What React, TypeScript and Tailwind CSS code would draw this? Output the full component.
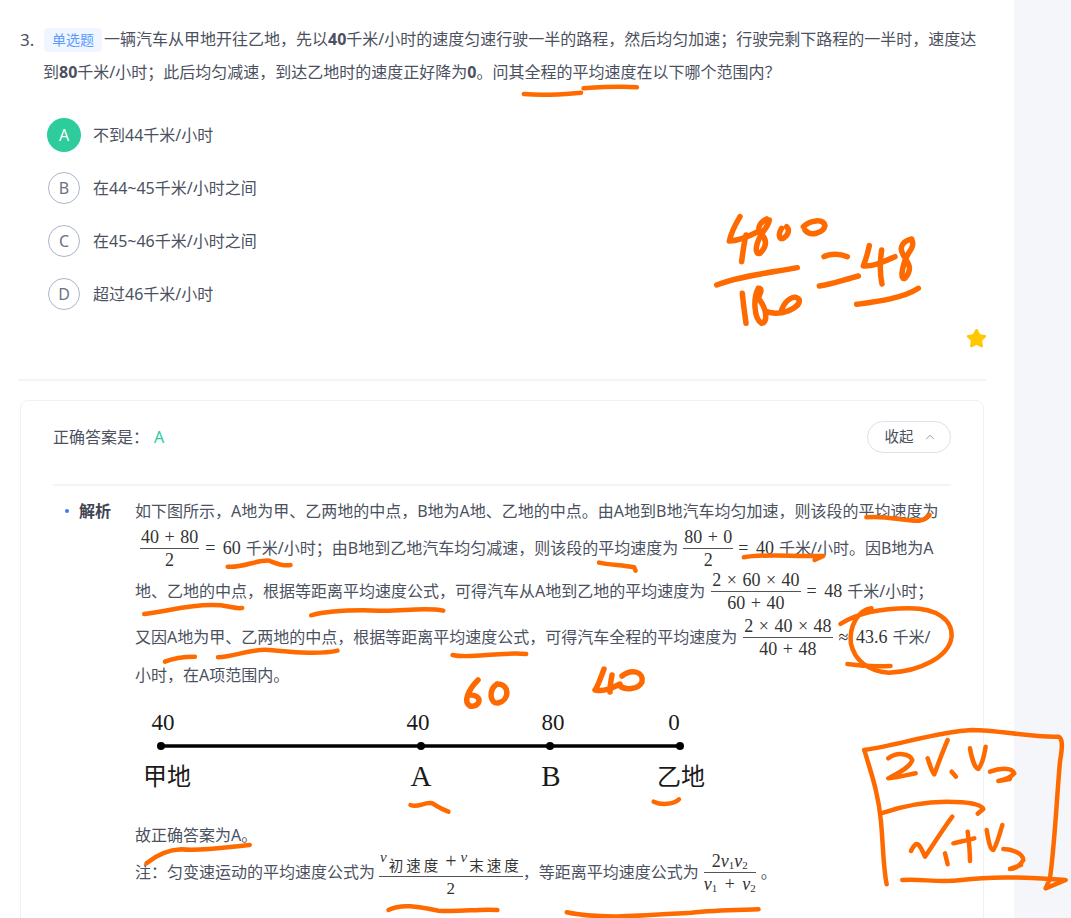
import type { ReactNode } from "react";
import { ChevronUp, Star } from "lucide-react";

const options = [
  { key: "A", text: "不到44千米/小时", correct: true },
  { key: "B", text: "在44~45千米/小时之间", correct: false },
  { key: "C", text: "在45~46千米/小时之间", correct: false },
  { key: "D", text: "超过46千米/小时", correct: false },
];

const Frac = ({ top, bottom, className }: { top: ReactNode; bottom: ReactNode; className?: string }) => (
  <span className={`inline-flex flex-col items-center font-['Liberation_Serif',serif] text-[18px] leading-[22px] text-[#333] [word-spacing:1px] ${className ?? ""}`}>
    <span className="w-full text-center whitespace-nowrap px-[1px]">{top}</span>
    <span className="w-full border-t border-[#555] text-center whitespace-nowrap">{bottom}</span>
  </span>
);

const M = ({ children }: { children: ReactNode }) => (
  <span className="mr-[5px] font-['Liberation_Serif',serif] text-[18px] text-[#333] whitespace-pre [word-spacing:3px]">{children}</span>
);

const ink = "#ff6a00";

// hand written strokes, coordinates taken from the enlarged crops
const sumStrokes = [
  "M90 35 C75 60 62 90 58 108 C85 108 115 95 148 78",
  "M108 90 C102 115 98 145 95 170",
  "M170 42 C145 55 140 75 155 88 C172 105 170 125 150 145 C135 150 135 125 150 95 C160 75 175 65 178 45",
  "M215 70 C205 85 205 105 220 100 C235 90 240 75 230 65",
  "M280 65 C300 45 340 40 345 62 C340 85 300 95 285 75",
  "M20 240 C80 215 170 205 262 188",
  "M97 265 C100 300 105 330 108 355",
  "M145 250 C130 275 130 340 155 355 C175 350 170 310 145 280 C150 265 160 250 145 250",
  "M170 320 C210 335 270 310 268 285 C255 265 225 285 215 315",
  "M342 155 C360 145 390 145 412 155",
  "M328 243 C360 240 400 225 445 213",
  "M478 122 C472 150 465 170 460 183 C490 185 520 170 555 155",
  "M515 135 C510 170 510 210 516 237",
  "M605 102 C580 108 565 125 580 150 C595 175 610 190 585 220 C570 225 575 190 590 155 C600 135 615 125 605 102",
  "M440 298 C500 290 580 280 625 250",
];

const questionStrokes = [
  "M155 265 C200 262 260 258 310 262",
  "M-18 282 C50 288 100 282 148 278",
];

const leftStrokes = [
  "M660 560 C700 565 740 540 780 542 C800 550 820 560 842 555",
  "M418 702 C480 695 560 670 640 676 C670 680 690 688 702 684",
  "M902 706 C960 690 1040 690 1100 692 C1160 695 1230 680 1285 692",
  "M478 845 C500 835 530 830 565 830",
  "M632 832 C680 830 730 805 780 810 C840 815 920 825 978 812",
  "M1312 825 C1360 838 1440 815 1525 822",
];

const rightStrokes = [
  "M975 112 C1030 105 1090 125 1130 122 C1145 118 1155 110 1158 105",
  "M200 248 C230 255 270 255 302 262 L306 272",
  "M620 232 C680 220 760 230 850 228 L825 240",
  "M900 432 C940 405 1000 385 1100 385 C1180 385 1225 420 1222 470 C1215 530 1130 575 1040 578 C980 575 940 540 930 490 C925 440 950 390 990 385",
  "M920 552 C960 558 1010 560 1045 558",
];

const figureStrokes = [
  "M712 345 C730 355 745 335 765 340 C780 350 790 358 805 365",
  "M1308 335 C1325 345 1355 345 1370 328",
  "M65 520 C85 500 110 480 150 478 C200 485 270 470 318 465",
  "M658 660 C690 640 730 650 780 662 C830 668 880 655 925 660",
  "M1095 667 C1180 690 1300 675 1400 668 C1460 660 1520 660 1565 658",
];

const boxStrokes = [
  "M28 75 C130 60 250 20 350 15 C430 15 530 38 610 35 C625 40 622 70 615 110 C605 220 600 350 585 460 L572 490 L632 465 C520 458 420 452 320 465 C250 475 200 460 142 465",
  "M28 75 C45 135 70 200 78 290 C85 370 85 430 95 478",
  "M78 265 C150 240 240 225 320 232 C360 235 380 243 385 252 L368 266",
  "M100 100 C125 80 165 85 172 105 C165 130 125 145 100 160 C125 158 155 150 182 145",
  "M218 100 C225 120 230 140 238 148 C250 115 265 75 278 45",
  "M290 140 L303 155",
  "M345 70 C350 100 360 130 370 132 C380 120 388 90 392 65",
  "M405 140 C430 130 470 125 478 145 C465 160 445 165 430 168 L465 162",
  "M168 378 C185 340 195 360 210 395 C225 375 265 310 292 275",
  "M270 385 L278 418",
  "M295 355 C315 350 340 345 358 340",
  "M338 320 C342 350 345 385 345 408",
  "M395 315 C400 345 405 375 415 375 C425 360 435 325 442 300",
  "M445 372 C470 372 505 385 505 405 C495 425 475 432 465 432 L498 420",
];

const looseStrokes = [
  "M478 680 C468 690 463 702 470 706 C480 708 484 695 470 695",
  "M497 684 C488 690 490 704 498 703 C510 700 510 684 497 684",
  "M604 669 C600 680 597 688 595 690 C605 692 612 688 620 684",
  "M612 675 C610 685 610 690 610 692",
  "M622 676 C632 668 644 672 642 682 C638 690 625 690 620 686",
];

const Strokes = ({ list, transform, width = 4.5 }: { list: string[]; transform?: string; width?: number }) => (
  <g transform={transform}>
    {list.map((d) => (
      <path key={d} d={d} fill="none" stroke={ink} strokeWidth={width} strokeLinecap="round" strokeLinejoin="round" vectorEffect="non-scaling-stroke" />
    ))}
  </g>
);

const Figure = () => (
  <svg width="600" height="100" viewBox="135 700 600 100" className="block">
    <line x1="161" y1="746" x2="680" y2="746" stroke="#000" strokeWidth="3.5" />
    {[161, 421, 550, 680].map((x) => (
      <circle key={x} cx={x} cy="746" r="4" fill="#000" />
    ))}
    <g fontFamily="'Liberation Serif', serif" fontSize="23" fill="#1a1a1a" textAnchor="middle">
      <text x="163" y="730">40</text>
      <text x="418" y="730">40</text>
      <text x="553" y="730">80</text>
      <text x="674" y="730">0</text>
      <text x="421" y="786" fontSize="29">A</text>
      <text x="551" y="786" fontSize="29">B</text>
    </g>
    <g fontFamily="'Noto Sans CJK SC', sans-serif" fontSize="24" fill="#1a1a1a" textAnchor="middle">
      <text x="167" y="785">甲地</text>
      <text x="681" y="785">乙地</text>
    </g>
  </svg>
);

export default function App() {
  return (
    <div className="relative flex h-[918px] w-[1071px] overflow-hidden bg-[#f5f6fa] font-['Noto_Sans','Noto_Sans_CJK_SC',sans-serif] text-[16px] text-[#4b5160]">
      <div className="w-[1014px] shrink-0 bg-white pl-[18px] pr-[28px]">
        {/* Question */}
        <div className="flex pl-[2px] pt-[23px] leading-[33px]">
          <div className="w-[23px] shrink-0 text-[17px]">3.</div>
          <div className="flex-1 whitespace-nowrap">
            <div className="flex items-center">
              <span className="ml-[1px] mr-[2px] h-[24px] rounded-[4px] bg-[#f0f6ff] px-[8px] text-[14px] leading-[24px] text-[#5b9bff]">单选题</span>
              <span>
                一辆汽车从甲地开往乙地，先以<b className="font-bold">40</b>千米/小时的速度匀速行驶一半的路程，然后均匀加速；行驶完剩下路程的一半时，速度达
              </span>
            </div>
            <div>
              到<b className="font-bold">80</b>千米/小时；此后均匀减速，到达乙地时的速度正好降为<b className="font-bold">0</b>。问其全程的平均速度在以下哪个范围内？
            </div>
            <div className="ml-[4px] mt-[29px] flex flex-col gap-[19px]">
              {options.map((o) => (
                <div key={o.key} className="flex h-[34px] items-center gap-[12px] leading-none">
                  <div className="flex w-[34px] justify-center">
                    {o.correct ? (
                      <div className="flex h-[34px] w-[34px] items-center justify-center rounded-full bg-[#2ecb9d] text-white">{o.key}</div>
                    ) : (
                      <div className="flex h-[32px] w-[32px] items-center justify-center rounded-full border border-[#aeb3c9] text-[#6b7285]">{o.key}</div>
                    )}
                  </div>
                  <span>{o.text}</span>
                </div>
              ))}
            </div>
          </div>
        </div>

        <div className="mt-[68px] h-[2px] bg-[#f3f4f6]" />

        {/* Answer card */}
        <div className="mx-[2px] mt-[19px] h-[560px] rounded-t-[8px] border border-[#f0f1f3] px-[32px]">
          <div className="flex items-start justify-between pb-[31px] pt-[20px]">
            <div className="flex h-[32px] items-center">
              正确答案是：<span className="ml-[5px] text-[#2ecb9d]">A</span>
            </div>
            <button className="flex h-[32px] w-[84px] items-center justify-center gap-[9px] rounded-full border border-[#dfe1e8] pl-[3px] text-[14.5px] text-[#4b5160]">
              收起 <ChevronUp size={14} strokeWidth={1.5} className="text-[#8b90a0]" />
            </button>
          </div>
          <div className="h-[2px] bg-[#f3f4f6]" />

          <div className="mt-[8px] flex">
            <div className="flex h-[34px] w-[82px] shrink-0 items-center">
              <span className="ml-[12px] mr-[10px] h-[4px] w-[4px] rounded-full bg-[#3b7cf5]" />
              <b className="font-bold text-[#3f4451]">解析</b>
            </div>
            <div className="flex-1 whitespace-nowrap">
              <div className="flex h-[34px] items-center">
                如下图所示，A地为甲、乙两地的中点，B地为A地、乙地的中点。由A地到B地汽车均匀加速，则该段的平均速度为
              </div>
              <div className="flex h-[40px] items-center">
                <Frac className="ml-[5px] mr-[6px]" top="40 + 80" bottom="2" />
                <M>= 60</M>千米/小时；由B地到乙地汽车均匀减速，则该段的平均速度为
                <Frac className="mx-[5px]" top="80 + 0" bottom="2" />
                <M>= 40</M>千米/小时。因B地为A
              </div>
              <div className="flex h-[46px] items-center">
                地、乙地的中点，根据等距离平均速度公式，可得汽车从A地到乙地的平均速度为
                <Frac className="mx-[6px]" top="2 × 60 × 40" bottom="60 + 40" />
                <M>= 48</M>千米/小时；
              </div>
              <div className="flex h-[46px] items-center">
                又因A地为甲、乙两地的中点，根据等距离平均速度公式，可得汽车全程的平均速度为
                <Frac className="mx-[6px]" top="2 × 40 × 48" bottom="40 + 48" />
                <M>≈ 43.6</M>千米/
              </div>
              <div className="flex h-[30px] items-center">小时，在A项范围内。</div>
            </div>
          </div>

          <div className="ml-[82px] mt-[10px]">
            <Figure />
            <div className="mt-[20px] flex h-[30px] items-center whitespace-nowrap">故正确答案为A。</div>
            <div className="flex h-[44px] items-center whitespace-nowrap">
              注：匀变速运动的平均速度公式为
              <Frac
                className="ml-[4px]"
                top={
                  <span className="inline-flex h-[28px] items-end justify-center leading-[22px]">
                    <i className="mb-[8px] text-[15px]">v</i>
                    <span className="ml-[2px] font-['Noto_Sans_CJK_SC',sans-serif] text-[14.5px] tracking-[3px]">初速度</span>
                    <span className="mx-[4px] mb-[4px] text-[20px]">+</span>
                    <i className="mb-[8px] text-[15px]">v</i>
                    <span className="ml-[2px] font-['Noto_Sans_CJK_SC',sans-serif] text-[14.5px] tracking-[3px]">末速度</span>
                  </span>
                }
                bottom={<span className="text-[17px]">2</span>}
              />
              ，等距离平均速度公式为
              <Frac
                className="mx-[5px]"
                top={
                  <span>
                    2<i>v</i>
                    <sub className="text-[11px]">1</sub>
                    <i>v</i>
                    <sub className="text-[11px]">2</sub>
                  </span>
                }
                bottom={
                  <span className="[word-spacing:3px]">
                    <i>v</i>
                    <sub className="text-[11px]">1</sub> + <i>v</i>
                    <sub className="text-[11px]">2</sub>
                  </span>
                }
              />
              。
            </div>
          </div>
        </div>
      </div>

      <Star size={21} fill="#ffc800" stroke="#ffc800" strokeWidth={2} className="absolute left-[966px] top-[328px]" />

      {/* pen annotations on top of the page */}
      <svg width="1071" height="918" className="pointer-events-none absolute left-0 top-0">
        <Strokes list={sumStrokes} transform="translate(710 205) scale(0.3333)" width={5.5} />
        <Strokes list={questionStrokes} transform="translate(530 0) scale(0.345 0.3333)" />
        <Strokes list={leftStrokes} transform="translate(0 380) scale(0.345 0.3333)" />
        <Strokes list={rightStrokes} transform="translate(530 480) scale(0.345 0.3333)" />
        <Strokes list={figureStrokes} transform="translate(120 690) scale(0.408 0.3333)" />
        <Strokes list={boxStrokes} transform="translate(855 725) scale(0.3333)" width={4.5} />
        <Strokes list={looseStrokes} width={5.5} />
      </svg>
    </div>
  );
}
